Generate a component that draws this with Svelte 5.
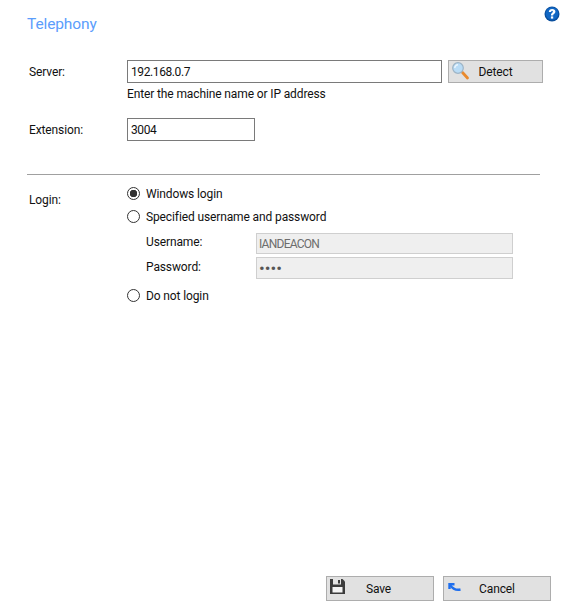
<script>
    let server = $state('192.168.0.7');
    let extension = $state('3004');
    let login = $state('windows');
</script>

<div class="page">
    <header class="head">
        <h1>Telephony</h1>
        <svg class="help" width="16" height="16" viewBox="0 0 16 16" aria-label="Help">
            <circle cx="8" cy="8" r="7.500" fill="#0a4f9e" />
            <circle cx="8" cy="7.500" r="6.300" fill="#1167c4" />
            <path d="M4.800 5.900C4.900 4 6.200 2.900 8.200 2.900c1.900 0 3.200 1.100 3.200 2.700 0 1.200-.6 1.800-1.400 2.400-.6.400-.8.700-.8 1.400H6.900c0-1.300.3-1.900 1.100-2.500.6-.4.900-.7.900-1.300 0-.5-.3-.8-.8-.8-.6 0-.9.400-1 1.100z" fill="#fff" />
            <rect x="6.900" y="10.400" width="2.300" height="2.200" fill="#fff" />
        </svg>
    </header>

    <div class="row server">
        <label for="server">Server:</label>
        <input id="server" class="wide" bind:value={server} />
        <button class="btn detect">
            <svg width="18" height="18" viewBox="0 0 18 18">
                <path d="M10.500 10.500L15.500 16" fill="none" stroke="#e98a2e" stroke-width="2.800" stroke-linecap="round" />
                <circle cx="6" cy="6" r="5.300" fill="#b9dcf6" stroke="#9db4c6" stroke-width="1.200" />
                <path d="M2.800 6A3.200 3.200 0 0 1 6 2.800" fill="none" stroke="#eaf5fd" stroke-width="1.500" />
            </svg>
            <span>Detect</span>
        </button>
    </div>
    <p class="hint">Enter the machine name or IP address</p>

    <div class="row extension">
        <label for="extension">Extension:</label>
        <input id="extension" class="short" bind:value={extension} />
    </div>

    <hr />

    <div class="login">
        <span class="login-label">Login:</span>
        <div class="options">
            <label class="radio"><input type="radio" bind:group={login} value="windows" /><i></i>Windows login</label>
            <label class="radio"><input type="radio" bind:group={login} value="specified" /><i></i>Specified username and password</label>
            <div class="creds">
                <label for="username">Username:</label>
                <input id="username" value="IANDEACON" disabled />
                <label for="password">Password:</label>
                <input id="password" type="password" value="abcd" disabled />
            </div>
            <label class="radio"><input type="radio" bind:group={login} value="none" /><i></i>Do not login</label>
        </div>
    </div>

    <footer class="actions">
        <button class="btn save">
            <svg width="15" height="15" viewBox="0 0 15 15">
                <path d="M0 0h12.500L15 2.500V15H0z" fill="#3c3c3c" />
                <rect x="3" y="0" width="8" height="5.500" fill="#e4e4e4" />
                <rect x="8" y="1" width="2" height="3.500" fill="#3c3c3c" />
                <rect x="2.500" y="8" width="10" height="5.500" fill="#f4f4f4" />
            </svg>
            <span>Save</span>
        </button>
        <button class="btn cancel">
            <svg width="13" height="10" viewBox="0 0 13 10">
                <path d="M1.500 6V1.300H6.500" fill="none" stroke="#1f6fee" stroke-width="2.400" />
                <path d="M2 1.800C4.500 5.500 8 7.500 12.500 6.500" fill="none" stroke="#1f6fee" stroke-width="2.400" />
            </svg>
            <span>Cancel</span>
        </button>
    </footer>
</div>

<style>
    :global(body) {
        background: #fff;
    }

    .page {
        box-sizing: border-box;
        width: 569px;
        height: 613px;
        display: flex;
        flex-direction: column;
        padding: 6px 18px 12px 27px;
        font-family: Roboto, "Open Sans", sans-serif;
        font-size: 12px;
        letter-spacing: -0.12px;
        color: #111;
    }

    .head {
        display: flex;
        justify-content: space-between;
        align-items: flex-start;
        height: 54px;
        margin-right: -9px;
    }

    h1 {
        margin: 7px 0 0;
        font-size: 15.500px;
        font-weight: 400;
        line-height: 22px;
        color: #5b9dfc;
    }

    .row {
        display: flex;
        align-items: center;
    }

    .row > label {
        width: 100px;
        padding-left: 2px;
        box-sizing: border-box;
    }

    input:not([type="radio"]) {
        box-sizing: border-box;
        height: 23px;
        padding: 0 3px;
        border: 1px solid #7a7a7a;
        background: #fff;
        font: inherit;
        letter-spacing: -0.4px;
        color: #111;
        outline: none;
    }

    .wide {
        width: 315px;
    }

    .short {
        width: 128px;
    }

    .btn {
        position: relative;
        display: flex;
        align-items: center;
        justify-content: center;
        box-sizing: border-box;
        height: 23px;
        padding: 0;
        border: 1px solid #adadad;
        background: #e1e1e1;
        font: inherit;
        letter-spacing: inherit;
        color: #111;
    }

    .btn svg {
        position: absolute;
        left: 3px;
        top: 1px;
    }

    .detect {
        width: 95px;
        margin-left: 6px;
    }

    .hint {
        margin: 3px 0 0 100px;
        line-height: 16px;
    }

    .extension {
        margin-top: 16px;
    }

    hr {
        width: 513px;
        margin: 33px 0 0;
        border: 0;
        border-top: 1px solid #a0a0a0;
    }

    .login {
        display: flex;
        margin-top: 7px;
    }

    .login-label {
        width: 100px;
        padding-left: 2px;
        box-sizing: border-box;
        line-height: 16px;
        margin-top: 10px;
    }

    .options {
        display: flex;
        flex-direction: column;
    }

    .radio {
        display: flex;
        align-items: center;
        height: 23px;
    }

    .radio input {
        position: absolute;
        opacity: 0;
    }

    .radio i {
        box-sizing: border-box;
        width: 13px;
        height: 13px;
        margin-right: 6px;
        border: 1px solid #333;
        border-radius: 50%;
    }

    .radio input:checked + i {
        background: radial-gradient(circle, #333 0 3.500px, #fff 4px);
    }

    .creds {
        display: grid;
        grid-template-columns: 110px 257px;
        align-items: center;
        row-gap: 3px;
        padding-left: 19px;
        margin: 5px 0 5px;
    }

    .creds label {
        padding-bottom: 3px;
    }

    .creds input {
        height: 22px;
        padding: 0 2px;
        border: 1px solid #cfcfcf;
        background: #efefef;
        color: #6d6d6d;
    }

    #username {
        height: 21px;
        letter-spacing: -0.75px;
    }

    #password {
        font-size: 17px;
        letter-spacing: 0;
        color: #555;
    }

    .actions {
        display: flex;
        justify-content: flex-end;
        gap: 9px;
        margin-top: auto;
    }

    .save,
    .cancel {
        width: 108px;
        height: 25px;
    }

    .save {
        padding-right: 3px;
    }

    .save svg {
        top: 2px;
    }

    .cancel svg {
        left: 4px;
        top: 6px;
    }
</style>
